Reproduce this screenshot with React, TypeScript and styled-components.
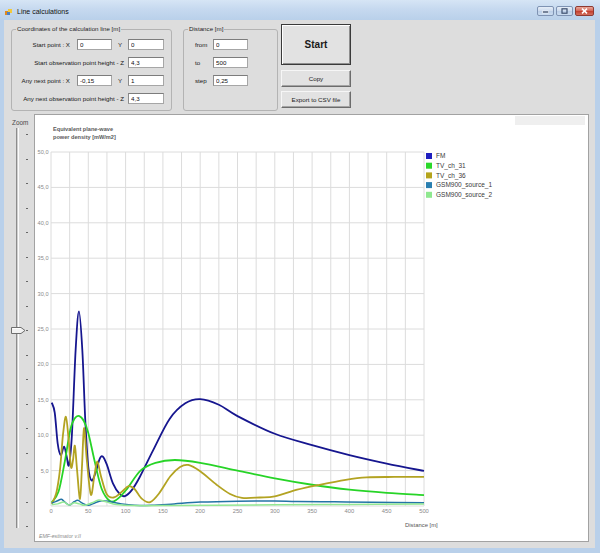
import React from "react";
import styled, { createGlobalStyle } from "styled-components";

const UI = `"Liberation Sans", Arial, sans-serif`;

const GlobalStyle = createGlobalStyle`
  * { box-sizing: border-box; }
  html, body { margin: 0; padding: 0; }
  body { width: 600px; height: 553px; overflow: hidden; background: #b9d1ea; font-family: ${UI}; }
`;

const Frame = styled.div`
  width: 600px;
  height: 553px;
  display: flex;
  flex-direction: column;
  padding: 0 5px 5px 4px;
  background: linear-gradient(180deg, #d6e5f5 0px, #c6d9ef 9px, #b9d0ea 20px, #b9d0ea 100%);
`;

const TitleBar = styled.div`
  height: 20px;
  flex: none;
  display: flex;
  align-items: center;
  padding: 3px 0 0 1px;
`;

const TitleText = styled.span`
  font-size: 7px;
  line-height: 8px;
  color: #111;
  margin-left: 4px;
`;

const CaptionButtons = styled.div`
  margin-left: auto;
  align-self: flex-start;
  margin-top: 3px;
  margin-right: 1px;
  display: flex;
  gap: 2px;
`;

const CaptionButton = styled.div<{ $w: number; $close?: boolean }>`
  width: ${(p) => p.$w}px;
  height: 10px;
  border: 1px solid ${(p) => (p.$close ? "#8e3a32" : "#7f93b3")};
  border-radius: 2px;
  display: flex;
  align-items: center;
  justify-content: center;
  background: ${(p) =>
    p.$close
      ? "linear-gradient(180deg, #e9a99b 0%, #d46a5c 45%, #c4402f 55%, #d3705f 100%)"
      : "linear-gradient(180deg, #e6eef8 0%, #cfdcee 45%, #bccfe8 55%, #cbdcf0 100%)"};
`;

const Body = styled.div`
  flex: 1;
  min-height: 0;
  background: #dddddd;
  display: flex;
  flex-direction: column;
  padding: 5px 6px 6px 7px;
`;

const TopRow = styled.div`
  display: flex;
  align-items: stretch;
  flex: none;
`;

const GroupBox = styled.fieldset<{ $w: number; $ml?: number }>`
  margin: 0 0 0 ${(p) => p.$ml ?? 0}px;
  width: ${(p) => p.$w}px;
  min-width: 0;
  padding: 6px 7px 6px 0;
  border: 1px solid #b3b3b3;
  border-radius: 3px;
`;

const Caption = styled.legend`
  margin-left: 4px;
  padding: 0 1px;
  font-size: 6.2px;
  line-height: 8px;
  color: #1e1e1e;
`;

const CoordGrid = styled.div`
  display: grid;
  grid-template-columns: 65px 35px 16px 36px;
  grid-auto-rows: 11px;
  row-gap: 7px;
`;

const DistGrid = styled.div`
  display: grid;
  grid-template-columns: 18px 35px;
  grid-auto-rows: 11px;
  row-gap: 7px;
  margin-left: 11px;
`;

const FieldLabel = styled.span<{ $span?: string; $align?: string; $pr?: number }>`
  font-size: 6.2px;
  line-height: 11px;
  color: #161616;
  white-space: nowrap;
  grid-column: ${(p) => p.$span ?? "auto"};
  text-align: ${(p) => p.$align ?? "left"};
  padding-right: ${(p) => p.$pr ?? 0}px;
`;

const TextBox = styled.input`
  width: 100%;
  height: 11px;
  margin: 0;
  padding: 0 1px 0 2px;
  border: 1px solid #a6a6a6;
  border-top-color: #7c7c7c;
  border-left-color: #8c8c8c;
  background: #fff;
  font-family: ${UI};
  font-size: 6.2px;
  line-height: 9px;
  color: #111;
  outline: none;
`;

const ButtonColumn = styled.div`
  margin-left: 3px;
  margin-top: -1px;
  width: 70px;
  display: flex;
  flex-direction: column;
  gap: 4.5px;
  align-self: flex-start;
`;

const Button = styled.button<{ $primary?: boolean }>`
  height: ${(p) => (p.$primary ? 41 : 17)}px;
  margin: 0;
  padding: 0;
  font-family: ${UI};
  font-size: ${(p) => (p.$primary ? "10px" : "6.2px")};
  font-weight: ${(p) => (p.$primary ? 700 : 400)};
  color: #1a1a1a;
  background: #e2e2e2;
  border: 1px solid;
  border-color: ${(p) => (p.$primary ? "#3a3a3a" : "#f6f6f6 #6c6c6c #6c6c6c #f6f6f6")};
  box-shadow: ${(p) =>
    p.$primary
      ? "inset 1px 1px 0 #ffffff, inset -1px -1px 0 #8e8e8e"
      : "inset -1px -1px 0 #a4a4a4"};
`;

const BottomRow = styled.div`
  flex: 1;
  min-height: 0;
  display: flex;
  margin-top: 3px;
`;

const ZoomColumn = styled.div`
  width: 23px;
  flex: none;
  display: flex;
  flex-direction: column;
`;

const ZoomLabel = styled.div`
  font-size: 6.4px;
  line-height: 8px;
  color: #4a4a4a;
  margin: 5px 0 0 1px;
`;

const SliderArea = styled.div`
  position: relative;
  flex: 1;
  display: flex;
  margin: 1px 0 12px;
`;

const Track = styled.div`
  margin: 0 0 2px 5px;
  width: 3px;
  border-left: 1px solid #8c8c8c;
  border-right: 1px solid #fbfbfb;
  background: #cfcfcf;
`;

const TickColumn = styled.div`
  margin-left: 7px;
  width: 2px;
  display: flex;
  flex-direction: column;
  justify-content: space-between;
  padding: 6px 0 3px;
`;

const Tick = styled.div`
  height: 1px;
  background: #666;
`;

const Thumb = styled.svg`
  position: absolute;
  left: 0;
  display: block;
`;

const ChartPanel = styled.div`
  position: relative;
  flex: 1;
  background: #fff;
  border: 1px solid #a2a2a2;
`;

const PanelStrip = styled.div`
  position: absolute;
  top: 1px;
  right: 3px;
  width: 70px;
  height: 9px;
  background: #efefef;
`;

const ChartSvg = styled.svg`
  display: block;
  width: 100%;
  height: 100%;
  font-family: ${UI};
`;

/* ---------- chart data ---------- */
const X0 = 51;
const XS = 373 / 500;
const Y0 = 506;
const YS = 354 / 50;
const px = (d: number) => X0 + d * XS;
const py = (v: number) => Y0 - v * YS;

type Pt = [number, number];

function spline(pts: Pt[]): string {
  const P = pts.map(([d, v]) => [px(d), py(v)]);
  let s = `M${P[0][0].toFixed(2)},${P[0][1].toFixed(2)}`;
  for (let i = 0; i < P.length - 1; i++) {
    const p0 = P[i - 1] || P[i];
    const p1 = P[i];
    const p2 = P[i + 1];
    const p3 = P[i + 2] || P[i + 1];
    const t = 1 / 6;
    const c1x = p1[0] + (p2[0] - p0[0]) * t;
    const c1y = p1[1] + (p2[1] - p0[1]) * t;
    const c2x = p2[0] - (p3[0] - p1[0]) * t;
    const c2y = p2[1] - (p3[1] - p1[1]) * t;
    s += ` C${c1x.toFixed(2)},${c1y.toFixed(2)} ${c2x.toFixed(2)},${c2y.toFixed(2)} ${p2[0].toFixed(2)},${p2[1].toFixed(2)}`;
  }
  return s;
}

const series: { name: string; line: string; box: string; w: number; pts: Pt[] }[] = [
  {
    name: "FM",
    line: "#16168f",
    box: "#1f1fbf",
    w: 1.8,
    pts: [
      [1, 14.6], [5, 13.2], [9, 8.8], [13, 7.2], [17.5, 8.4], [21, 7], [24, 5.8], [28, 10],
      [33, 22], [37.5, 27.5], [42, 22], [46, 12], [50, 5.5], [54.5, 3.6], [60, 4.8], [65, 6.6],
      [69.3, 7.0], [75, 5.8], [83, 3.2], [92, 1.7], [99, 1.4], [108, 2.2], [119, 4.1], [137, 7.9],
      [159, 12.3], [180, 14.5], [200, 15.1], [225, 14.3], [250, 12.7], [300, 10.2], [350, 8.6],
      [400, 7.2], [450, 6.0], [500, 4.95],
    ],
  },
  {
    name: "TV_ch_31",
    line: "#27d427",
    box: "#2ad82a",
    w: 1.8,
    pts: [
      [1, 0.5], [10, 2], [18, 6], [26, 10.8], [32, 12.4], [38, 12.7], [44, 12], [50, 10.3],
      [59, 6.1], [68, 2.4], [79, 0.7], [88, 0.9], [101, 2.3], [120, 5.0], [140, 6.1], [166, 6.5],
      [200, 6.1], [250, 5.0], [300, 3.9], [350, 3.0], [400, 2.3], [450, 1.85], [500, 1.55],
    ],
  },
  {
    name: "TV_ch_36",
    line: "#b3a322",
    box: "#b4a41c",
    w: 1.8,
    pts: [
      [1, 0.3], [7, 1.8], [12, 5.1], [16, 10], [20, 12.6], [23.5, 9.5], [26.8, 5.5], [29.5, 6.5],
      [32, 8.5], [35, 5], [38.9, 1.0], [41.5, 5.5], [44.3, 11.0], [48, 6.5], [53.4, 1.6], [58, 4.2],
      [62, 6.3], [67, 4.2], [74.6, 1.7], [84, 1.2], [95, 2.0], [104, 2.8], [112, 2.4], [122, 1.0],
      [133, 0.55], [145, 1.8], [160, 4.2], [173, 5.5], [184, 5.8], [200, 4.9], [222, 3.0],
      [240, 1.7], [256, 1.15], [280, 1.2], [300, 1.35], [330, 2.3], [360, 3.0], [395, 3.7],
      [423, 4.05], [460, 4.1], [500, 4.1],
    ],
  },
  {
    name: "GSM900_source_1",
    line: "#2474a6",
    box: "#2a7fb0",
    w: 1.5,
    pts: [
      [1, 0.4], [8, 0.7], [14, 0.95], [19, 0.5], [25, 0.15], [31, 0.6], [36, 0.8], [42, 0.4],
      [50, 0.1], [58, 0.4], [68, 0.75], [80, 0.6], [95, 0.3], [112, 0.12], [135, 0.1], [165, 0.3],
      [200, 0.55], [250, 0.68], [300, 0.7], [330, 0.62], [380, 0.6], [430, 0.52], [500, 0.45],
    ],
  },
  {
    name: "GSM900_source_2",
    line: "#93e893",
    box: "#8fe88f",
    w: 1.5,
    pts: [
      [1, 0.2], [9, 0.3], [17, 0.55], [24, 0.15], [31, 0.45], [38, 0.3], [45, 0.1], [55, 0.45],
      [64, 0.85], [74, 0.6], [88, 0.2], [110, 0.06], [160, 0.06], [220, 0.1], [300, 0.16],
      [400, 0.22], [500, 0.28],
    ],
  },
];

const xTicks = Array.from({ length: 21 }, (_, i) => i * 25);
const yTicks = Array.from({ length: 11 }, (_, i) => i * 5);
const xLabels = Array.from({ length: 11 }, (_, i) => i * 50);
const yLabels = Array.from({ length: 10 }, (_, i) => (i + 1) * 5);

function Chart() {
  return (
    <ChartSvg viewBox="35 115 553 426" preserveAspectRatio="none">
      <text x={53} y={131} fontSize={5.6} fontWeight={700} fill="#5a5a5a">
        Equivalent plane-wave
      </text>
      <text x={53} y={139} fontSize={5.6} fontWeight={700} fill="#5a5a5a">
        power density [mW/m2]
      </text>
      {xTicks.map((d) => (
        <line key={"vx" + d} x1={px(d)} x2={px(d)} y1={py(50)} y2={py(0)} stroke="#dcdcdc" strokeWidth={1} />
      ))}
      {yTicks.map((v) => (
        <line key={"hy" + v} x1={px(0)} x2={px(500)} y1={py(v)} y2={py(v)} stroke="#dcdcdc" strokeWidth={1} />
      ))}
      {yLabels.map((v) => (
        <text key={"yl" + v} x={48.5} y={py(v) + 2} fontSize={5.6} fill="#8a8a8a" textAnchor="end">
          {v.toFixed(1).replace(".", ",")}
        </text>
      ))}
      {xLabels.map((d) => (
        <text key={"xl" + d} x={px(d)} y={513} fontSize={5.8} fill="#8a8a8a" textAnchor="middle">
          {d}
        </text>
      ))}
      {series.map((s) => (
        <path key={s.name} d={spline(s.pts)} fill="none" stroke={s.line} strokeWidth={s.w} strokeLinejoin="round" />
      ))}
      {series.map((s, i) => (
        <g key={"lg" + s.name}>
          <rect x={426} y={153 + i * 9.7} width={6} height={6} fill={s.box} />
          <text x={436} y={158.3 + i * 9.7} fontSize={6.5} fill="#3a3a3a">
            {s.name}
          </text>
        </g>
      ))}
      <text x={405} y={526.5} fontSize={5.9} fill="#555">
        Distance [m]
      </text>
      <text x={39} y={537.5} fontSize={5.2} fontStyle="italic" fill="#8c8c8c">
        EMF-estimator v.II
      </text>
    </ChartSvg>
  );
}

const TICKS = 17;
const TICK_STEP = 24.5;
const THUMB_INDEX = 8;

export default function App() {
  return (
    <>
      <GlobalStyle />
      <Frame>
        <TitleBar>
          <svg width="8" height="8" viewBox="0 0 8 8">
            <rect x="0" y="3" width="4" height="4" fill="#e08a1e" />
            <rect x="3" y="1" width="4" height="4" fill="#f3c93a" />
            <rect x="2" y="4" width="3" height="3" fill="#4a7fc8" />
          </svg>
          <TitleText>Line calculations</TitleText>
          <CaptionButtons>
            <CaptionButton $w={17}>
              <svg width="7" height="6" viewBox="0 0 7 6">
                <rect x="0.5" y="3" width="6" height="2" fill="#3d4f6e" stroke="#fff" strokeWidth="0.6" />
              </svg>
            </CaptionButton>
            <CaptionButton $w={17}>
              <svg width="7" height="6" viewBox="0 0 7 6">
                <rect x="1" y="0.8" width="5" height="4.4" fill="none" stroke="#3d4f6e" strokeWidth="1.2" />
              </svg>
            </CaptionButton>
            <CaptionButton $w={19} $close>
              <svg width="7" height="6" viewBox="0 0 7 6">
                <path d="M1 0.6 L6 5.4 M6 0.6 L1 5.4" stroke="#fff" strokeWidth="1.5" />
              </svg>
            </CaptionButton>
          </CaptionButtons>
        </TitleBar>
        <Body>
          <TopRow>
            <GroupBox $w={161}>
              <Caption>Coordinates of the calculation line [m]</Caption>
              <CoordGrid>
                <FieldLabel $align="right" $pr={7}>Start point : X</FieldLabel>
                <TextBox defaultValue="0" readOnly />
                <FieldLabel $align="center">Y</FieldLabel>
                <TextBox defaultValue="0" readOnly />
                <FieldLabel $span="1 / 4" $align="right" $pr={4}>Start observation point height - Z</FieldLabel>
                <TextBox defaultValue="4,3" readOnly />
                <FieldLabel $align="right" $pr={7}>Any next point : X</FieldLabel>
                <TextBox defaultValue="-0,15" readOnly />
                <FieldLabel $align="center">Y</FieldLabel>
                <TextBox defaultValue="1" readOnly />
                <FieldLabel $span="1 / 4" $align="right" $pr={4}>Any next observation point height - Z</FieldLabel>
                <TextBox defaultValue="4,3" readOnly />
              </CoordGrid>
            </GroupBox>
            <GroupBox $w={95} $ml={11}>
              <Caption>Distance [m]</Caption>
              <DistGrid>
                <FieldLabel>from</FieldLabel>
                <TextBox defaultValue="0" readOnly />
                <FieldLabel>to</FieldLabel>
                <TextBox defaultValue="500" readOnly />
                <FieldLabel>step</FieldLabel>
                <TextBox defaultValue="0,25" readOnly />
              </DistGrid>
            </GroupBox>
            <ButtonColumn>
              <Button $primary>Start</Button>
              <Button>Copy</Button>
              <Button>Export to CSV file</Button>
            </ButtonColumn>
          </TopRow>
          <BottomRow>
            <ZoomColumn>
              <ZoomLabel>Zoom</ZoomLabel>
              <SliderArea>
                <Track />
                <TickColumn>
                  {Array.from({ length: TICKS }, (_, i) => (
                    <Tick key={i} />
                  ))}
                </TickColumn>
                <Thumb
                  width="15"
                  height="7"
                  viewBox="0 0 15 7"
                  style={{ top: 6 + THUMB_INDEX * TICK_STEP - 3 }}
                >
                  <path d="M0.5 0.5 H10 L14 3.5 L10 6.5 H0.5 Z" fill="#f2f2f2" stroke="#6e6e6e" strokeWidth="1" />
                  <path d="M1.5 1.5 H9.6" stroke="#fff" strokeWidth="1" />
                </Thumb>
              </SliderArea>
            </ZoomColumn>
            <ChartPanel>
              <Chart />
              <PanelStrip />
            </ChartPanel>
          </BottomRow>
        </Body>
      </Frame>
    </>
  );
}
